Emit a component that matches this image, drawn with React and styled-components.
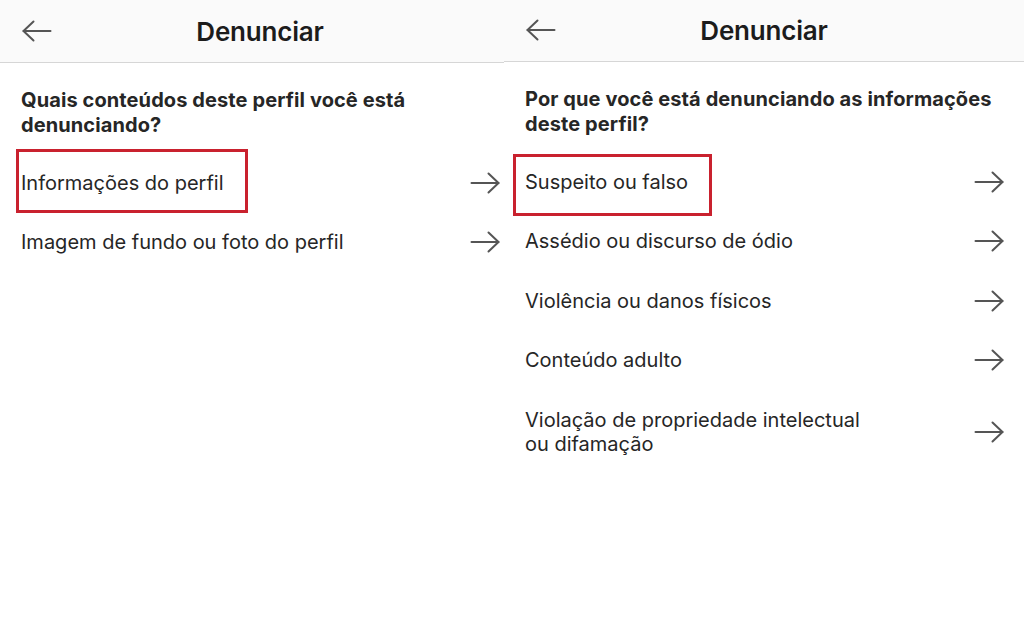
import styled, { createGlobalStyle } from "styled-components";

const GlobalStyle = createGlobalStyle`
  html, body {
    margin: 0;
    padding: 0;
    background: #ffffff;
  }
  body {
    font-family: Inter, "Liberation Sans", sans-serif;
    color: #262626;
  }
`;

const screens = [
  {
    width: 504,
    shift: 0,
    question: ["Quais conteúdos deste perfil você está", "denunciando?"],
    items: [
      { label: ["Informações do perfil"], mark: { top: -22, left: -5, right: -24, bottom: -18 } },
      { label: ["Imagem de fundo ou foto do perfil"] },
    ],
  },
  {
    width: 520,
    shift: -1,
    question: ["Por que você está denunciando as informações", "deste perfil?"],
    items: [
      { label: ["Suspeito ou falso"], mark: { top: -16, left: -12, right: -24, bottom: -22 } },
      { label: ["Assédio ou discurso de ódio"] },
      { label: ["Violência ou danos físicos"] },
      { label: ["Conteúdo adulto"] },
      { label: ["Violação de propriedade intelectual", "ou difamação"] },
    ],
  },
];

// Styles
const Page = styled.div`
  display: flex;
  width: 1024px;
  height: 633px;
  background: #ffffff;
  overflow: hidden;
`;

const Panel = styled.section`
  flex: 0 0 ${(p) => p.$width}px;
  overflow: hidden;
  margin-top: ${(p) => p.$shift}px;
`;

const Screen = styled.div`
  width: 520px;
`;

const Header = styled.header`
  display: grid;
  grid-template-columns: 1fr auto 1fr;
  align-items: center;
  height: 62px;
  background: #fafafa;
  border-bottom: 1px solid #d6d6d6;
`;

const BackButton = styled.span`
  display: flex;
  padding-left: 22px;
`;

const Title = styled.h1`
  margin: 0;
  font-size: 26px;
  font-weight: 600;
  letter-spacing: -0.2px;
  color: #1c1c1c;
`;

const Content = styled.div`
  padding: 25px 20px 0 21px;
`;

const Question = styled.h2`
  margin: 0 0 15px;
  font-size: 20px;
  line-height: 25px;
  font-weight: 700;
  letter-spacing: 0.1px;
  color: #262626;
`;

const Row = styled.div`
  display: flex;
  align-items: center;
  justify-content: space-between;
  padding: 17.75px 0;
`;

const Label = styled.span`
  position: relative;
  font-size: 20px;
  line-height: 24px;
  color: #262626;
`;

const Mark = styled.span`
  position: absolute;
  top: ${(p) => p.$top}px;
  left: ${(p) => p.$left}px;
  right: ${(p) => p.$right}px;
  bottom: ${(p) => p.$bottom}px;
  border: 3px solid #c9212e;
`;

const ArrowIcon = ({ back }) => (
  <svg width="30" height="22" viewBox="0 0 30 22" fill="none">
    <g
      stroke="#555555"
      strokeWidth="2"
      strokeLinecap="round"
      strokeLinejoin="round"
      transform={back ? "translate(30 0) scale(-1 1)" : undefined}
    >
      <path d="M1.5 11H28.5" />
      <path d="M18.5 1.5L28.5 11L18.5 20.5" />
    </g>
  </svg>
);

function ReportScreen({ data }) {
  return (
    <Panel $width={data.width} $shift={data.shift}>
      <Screen>
        <Header>
          <BackButton>
            <ArrowIcon back />
          </BackButton>
          <Title>Denunciar</Title>
          <span />
        </Header>
        <Content>
          <Question>
            {data.question[0]}
            <br />
            {data.question[1]}
          </Question>
          {data.items.map((item) => (
            <Row key={item.label[0]}>
              <Label>
                {item.label.map((line, i) => (
                  <span key={line}>
                    {i > 0 && <br />}
                    {line}
                  </span>
                ))}
                {item.mark && <Mark $top={item.mark.top} $left={item.mark.left} $right={item.mark.right} $bottom={item.mark.bottom} />}
              </Label>
              <ArrowIcon />
            </Row>
          ))}
        </Content>
      </Screen>
    </Panel>
  );
}

export default function App() {
  return (
    <>
      <GlobalStyle />
      <Page>
        {screens.map((s) => (
          <ReportScreen key={s.question[0]} data={s} />
        ))}
      </Page>
    </>
  );
}
